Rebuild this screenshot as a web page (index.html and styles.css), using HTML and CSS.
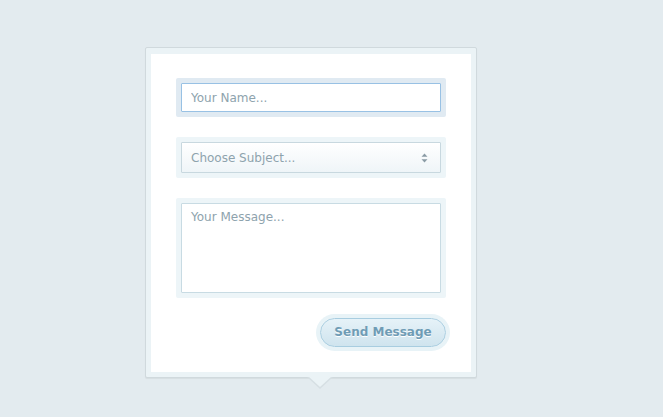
FILE: index.html
```html
<!DOCTYPE html>
<html>
<head>
<meta charset="utf-8">
<link rel="stylesheet" href="styles.css">
</head>
<body>
<div class="card">
  <form class="card-body">
    <div class="field field-focus">
      <input class="input input-focus" type="text" placeholder="Your Name...">
    </div>
    <div class="field">
      <div class="select">
        <span class="select-text">Choose Subject...</span>
        <svg class="select-arrows" width="7" height="10" viewBox="0 0 7 10"><path d="M3.5 0.5 L6.5 3.8 L0.5 3.8 Z M3.5 9.5 L6.5 6.2 L0.5 6.2 Z" fill="#8a9ba5"/></svg>
      </div>
    </div>
    <div class="field">
      <textarea class="textarea" placeholder="Your Message..."></textarea>
    </div>
    <div class="actions">
      <button class="btn" type="button">Send Message</button>
    </div>
  </form>
</div>
</body>
</html>
```
FILE: styles.css
```css
html, body {
  margin: 0;
  padding: 0;
}
body {
  background: #e3ebef;
  font-family: "DejaVu Sans", Verdana, sans-serif;
  height: 417px;
  overflow: hidden;
}
.card {
  position: relative;
  width: 320px;
  margin: 47px 0 0 145px;
  padding: 6px 5px 5px 5px;
  background: #ebf3f6;
  border: 1px solid #d0d9dd;
  border-radius: 2px;
  box-shadow: 0 1px 1px rgba(0,0,0,0.06);
}
.card::after {
  content: "";
  position: absolute;
  left: 161px;
  bottom: -12px;
  width: 0;
  height: 0;
  border-left: 13px solid transparent;
  border-right: 13px solid transparent;
  border-top: 12px solid #d6dfe3;
}
.card::before {
  content: "";
  position: absolute;
  left: 162px;
  bottom: -10px;
  width: 0;
  height: 0;
  border-left: 12px solid transparent;
  border-right: 12px solid transparent;
  border-top: 11px solid #ebf3f6;
  z-index: 1;
}
.card-body {
  display: flex;
  flex-direction: column;
  gap: 20px;
  margin: 0;
  padding: 24px 25px 25px 25px;
  background: #ffffff;
}
.field {
  padding: 5px;
  background: #edf5f8;
  border-radius: 2px;
}
.field-focus {
  background: #e0eaf2;
}
.input, .textarea, .select {
  display: block;
  box-sizing: border-box;
  width: 260px;
  margin: 0;
  font-family: "DejaVu Sans", Verdana, sans-serif;
  font-size: 12px;
  color: #6f8894;
  border: 1px solid #c9dbe3;
  border-radius: 1px;
  outline: none;
  background: #fff;
}
.input {
  height: 29px;
  padding: 0 9px;
}
.input-focus {
  border-color: #98c1e4;
}
.input::placeholder, .textarea::placeholder {
  color: #8ea3ad;
  opacity: 1;
}
.select {
  height: 31px;
  padding: 0 9px;
  display: flex;
  align-items: center;
  justify-content: space-between;
  background: linear-gradient(#ffffff, #eff5f8);
  border-color: #c8d8df;
}
.select-text {
  color: #8ea3ad;
}
.select-arrows {
  margin-right: 3px;
}
.textarea {
  height: 90px;
  padding: 6px 9px;
  resize: none;
  border-color: #c8dbe3;
}
.actions {
  display: flex;
  justify-content: flex-end;
}
.btn {
  box-sizing: border-box;
  width: 126px;
  height: 29px;
  margin: 0;
  padding: 0 0 1px 0;
  font-family: "DejaVu Sans", Verdana, sans-serif;
  font-size: 12px;
  font-weight: bold;
  color: #6f9cb5;
  text-shadow: 0 1px 0 #ffffff;
  background: linear-gradient(#e6f2f8, #cfe4ee);
  border: 1px solid #a8cde0;
  border-radius: 15px;
  box-shadow: 0 0 0 4px #e8f3f7;
}
```
